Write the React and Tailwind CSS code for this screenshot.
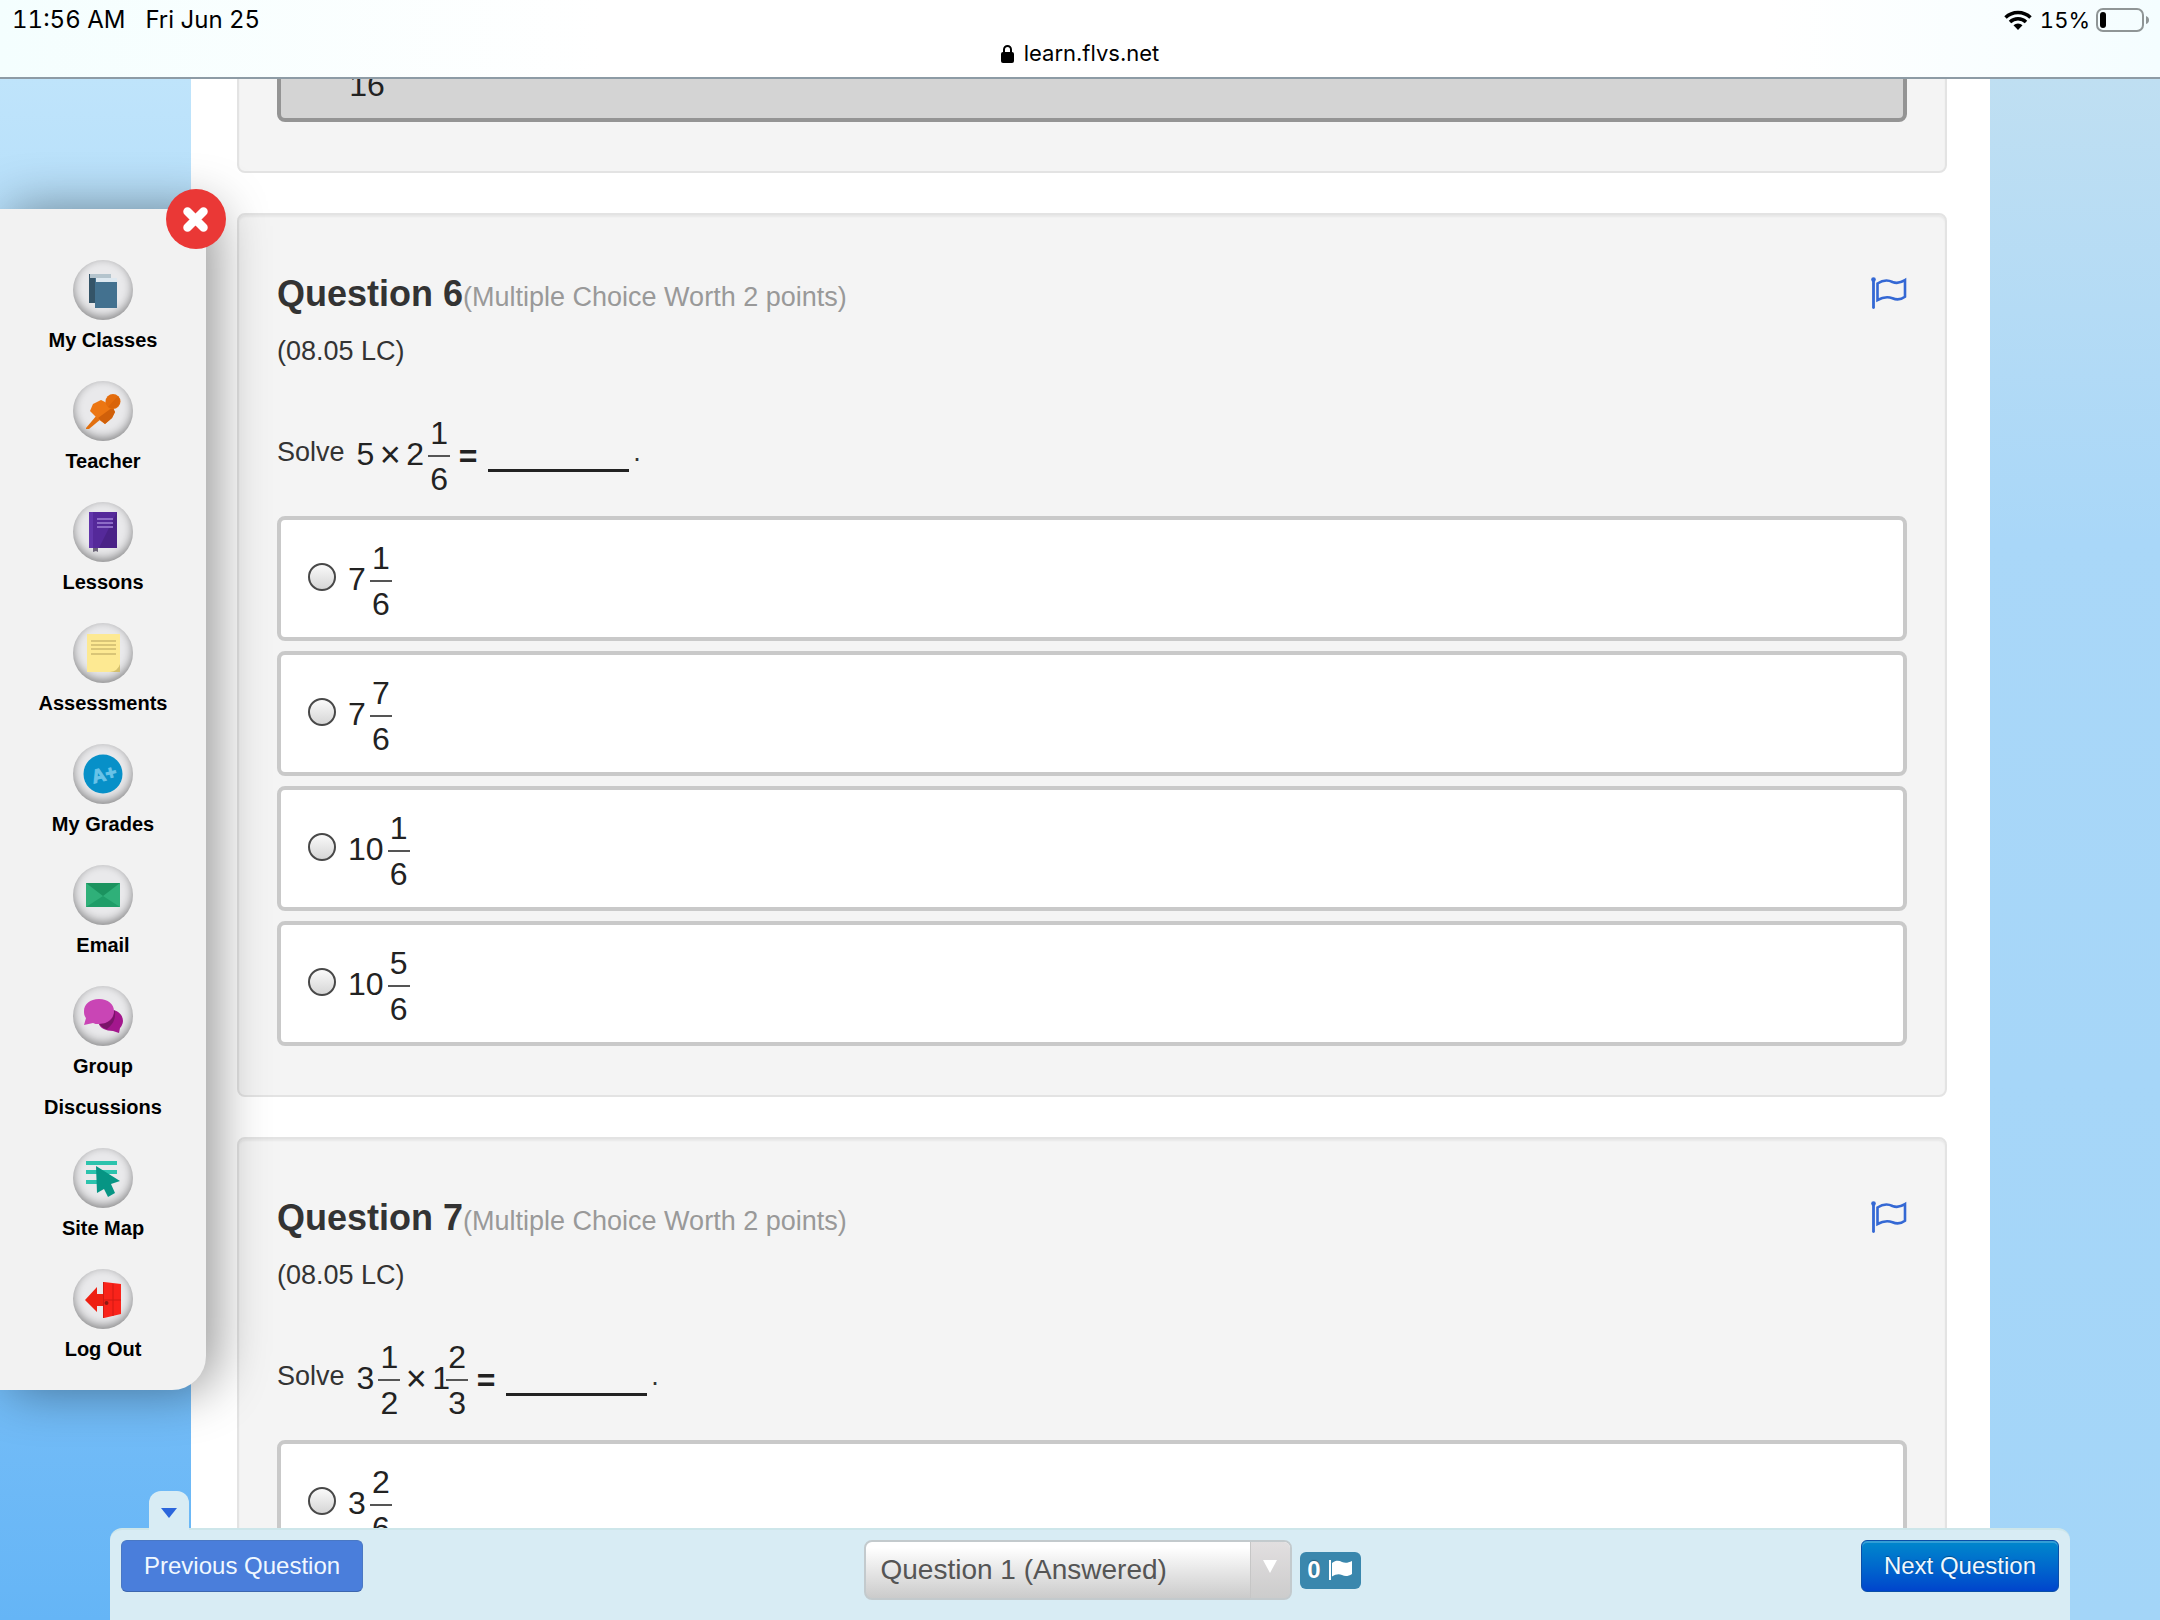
import { useState } from 'react'

function BooksIcon() {
  return (
    <>
      <rect x="16" y="14" width="22" height="29" fill="#345468" />
      <rect x="17" y="14" width="21" height="4" fill="#b4c4cd" />
      <rect x="22" y="18" width="22" height="30" fill="#43718f" />
      <rect x="23" y="18" width="21" height="4" fill="#dde8f0" />
    </>
  )
}

function PinIcon() {
  return (
    <>
      <path d="M13 47 L24 34 L28 38 L16 48 L13 48 Z" fill="#e2700f" />
      <path d="M17 30 L20 23 L28 19 L34 22 L42 31 L39 37 L32 43 L25 38 Z" fill="#ec7612" />
      <path d="M40 26 L42 31 L39 37 L32 43 L25 37 Z" fill="#d0600a" />
      <circle cx="40" cy="20.500" r="7.500" fill="#e46c0c" />
      <path d="M45 15 A7.500 7.500 0 0 1 35 26 Z" fill="#d9640a" />
    </>
  )
}

function NotebookIcon() {
  return (
    <>
      <path d="M20 45h5v5l-2-1-3 1z" fill="#6b6478" />
      <rect x="16" y="10" width="28" height="36" fill="#55299a" />
      <path d="M44 10v36H26z" fill="#4a2287" />
      <rect x="16" y="10" width="4" height="36" fill="#6236ab" />
      <path d="M24 17h16M24 21h16M24 25h16" stroke="#8d6bc6" strokeWidth="2" />
    </>
  )
}

function NoteIcon() {
  return (
    <>
      <path d="M14 11h33v38H14z" fill="#fde992" />
      <path d="M37 49q8-1 10-8v8z" fill="#d3bf6d" />
      <path d="M18 18h25M18 22h25M18 26h25M18 31h25" stroke="#d9c577" strokeWidth="2" />
    </>
  )
}

function GradeIcon() {
  return (
    <>
      <circle cx="30" cy="30" r="19.500" fill="#0790c8" />
      <text x="31" y="37" textAnchor="middle" fontSize="19" fontWeight="bold" fill="#69c3e8" stroke="#69c3e8" strokeWidth="1" transform="rotate(-14 30 30)">
        A+
      </text>
    </>
  )
}

function MailIcon() {
  return (
    <>
      <rect x="13" y="18" width="34" height="24" fill="#2fb079" />
      <path d="M13 18h34L30 31z" fill="#1b935f" />
      <path d="M13 42h34L30 31z" fill="#1f9d68" />
    </>
  )
}

function ChatIcon() {
  return (
    <>
      <path d="M38 24c7 0 12 5 12 11 0 3-2 6-3 7l-1 5-6-2c-7 0-13-3-14-7z" fill="#a3178d" />
      <path d="M26 13c9 0 15 5 15 12s-6 13-15 13c-3 0-4 0-6-1l-9 2 2-7c-2-2-2-5-2-7 0-7 6-12 15-12z" fill="#c945b5" />
      <path d="M41 24c1 8-5 14-15 14 3 3 6 5 8 5 5-4 9-9 8-18z" fill="#7a1569" />
    </>
  )
}

function SiteMapIcon() {
  return (
    <>
      <path d="M13 15h31M13 24h31M13 34h14" stroke="#2cc3ad" strokeWidth="4" />
      <path d="M23 18 L47 33 L38 36 L42 45 L35 49 L31 41 L24 45 Z" fill="#069584" />
    </>
  )
}

function LogoutIcon() {
  return (
    <>
      <path d="M12 31 L24 18 V25 H30 V37 H24 V43 Z" fill="#ee2012" />
      <path d="M31 13 L48 15 V45 L31 49 Z" fill="#f9231a" />
      <path d="M30.500 13v36M40 15v32M31 31h17" stroke="#d01a12" strokeWidth="1" />
      <circle cx="33.500" cy="34" r="2" fill="#8d1a12" />
    </>
  )
}

const MENU = [
  { label: 'My Classes', Icon: BooksIcon },
  { label: 'Teacher', Icon: PinIcon },
  { label: 'Lessons', Icon: NotebookIcon },
  { label: 'Assessments', Icon: NoteIcon },
  { label: 'My Grades', Icon: GradeIcon },
  { label: 'Email', Icon: MailIcon },
  { label: 'Group Discussions', Icon: ChatIcon },
  { label: 'Site Map', Icon: SiteMapIcon },
  { label: 'Log Out', Icon: LogoutIcon },
]

function StatusBar() {
  return (
    <header className="relative z-30 h-[79px] shrink-0 border-b-2 border-[#8d9ba5] bg-[linear-gradient(90deg,#f4fefe,#fff_28%,#fff_82%,#f4fdff)] font-[Inter,sans-serif] text-[22px] leading-7 text-black">
      <div className="flex items-center justify-between pt-1.5 pr-2.5 pl-3">
        <div className="flex gap-5 text-2xl leading-7 tabular-nums">
          <span>11:56 AM</span>
          <span>Fri Jun 25</span>
        </div>
        <div className="flex items-center">
          <svg width="28" height="20" viewBox="0 0 28 20" className="mr-2" fill="none" stroke="#000" strokeWidth="3.500">
            <path d="M1.500 7.500a18 18 0 0 1 25 0" />
            <path d="M6 12a11.500 11.500 0 0 1 16 0" />
            <path d="M9.500 15.200a6.500 6.500 0 0 1 9 0L14 20z" fill="#000" stroke="none" />
          </svg>
          <span className="tabular-nums">15%</span>
          <svg width="54" height="24" viewBox="0 0 54 24" className="ml-1.5">
            <rect x="1" y="1" width="46" height="22" rx="6" fill="none" stroke="#8f9596" strokeWidth="2" />
            <rect x="4" y="4" width="6" height="16" rx="3" fill="#000" />
            <path d="M50 8q3 1 3 4t-3 4z" fill="#8f9596" />
          </svg>
        </div>
      </div>
      <div className="flex items-center justify-center gap-2.5 pt-[5px]">
        <svg width="13" height="19" viewBox="0 0 13 19">
          <path d="M3 9V5.500a3.500 3.500 0 0 1 7 0V9" fill="none" stroke="#000" strokeWidth="2" />
          <rect x="0" y="8" width="13" height="11" rx="2" fill="#000" />
        </svg>
        <span>learn.flvs.net</span>
      </div>
    </header>
  )
}

function Sidebar({ onClose }) {
  return (
    <nav className="absolute top-[130px] left-0 z-20 w-[206px] rounded-br-[34px] bg-[#f2f2f2] pt-[51px] shadow-[10px_0_52px_rgba(0,0,0,0.42)]">
      <button
        type="button"
        aria-label="Close menu"
        onClick={onClose}
        className="absolute -top-5 -right-5 flex size-[60px] items-center justify-center rounded-full bg-[#ea3836]"
      >
        <svg width="28" height="28" viewBox="0 0 28 28">
          <path d="M5.500 6.500l16 16M21.500 6.500l-16 16" stroke="#fff" strokeWidth="8.500" strokeLinecap="round" />
        </svg>
      </button>
      {MENU.map(({ label, Icon }) => (
        <a key={label} href="#" className="mb-5 flex flex-col items-center px-8 text-center text-xl leading-[41px] font-bold text-black">
          <span className="size-[60px] rounded-full bg-[#e9e9eb] shadow-[inset_0_-3px_10px_rgba(0,0,0,0.42)]">
            <svg viewBox="0 0 60 60" className="size-full">
              <Icon />
            </svg>
          </span>
          {label}
        </a>
      ))}
    </nav>
  )
}

function Fraction({ num, den, className = 'ml-1' }) {
  return (
    <span className={`flex w-[22px] flex-col items-center gap-1.5 ${className}`}>
      <span className="h-8">{num}</span>
      <span className="h-0.5 w-full bg-[#555555]" />
      <span>{den}</span>
    </span>
  )
}

function Num({ children }) {
  return <span className="pb-1">{children}</span>
}

function Times() {
  return <span className="mx-1.5 flex w-5 justify-center pb-0.5 text-4xl leading-8">×</span>
}

function Blank() {
  return (
    <>
      <span className="mr-2.5 ml-2 w-5 text-center font-bold">=</span>
      <span className="h-8 w-[141px] border-b-3 border-[#222222]" />
      <span className="pb-2 pl-1 text-[27px] text-[#333333]">.</span>
    </>
  )
}

function Option({ name, whole, num, den, selected }) {
  const look = selected ? 'border-[#949494] bg-[#d4d4d4]' : 'border-[#c9c9c9] bg-white'
  return (
    <label className={`flex items-center rounded-lg border-4 pt-[22px] pr-6 pb-[17px] pl-[27px] text-[32px] leading-8 text-[#222222] ${look}`}>
      <input
        type="radio"
        name={name}
        defaultChecked={selected}
        className="mr-3 mb-2 size-7 appearance-none rounded-full border-2 border-[#484848] bg-linear-to-b from-[#fafafa] to-[#d6d6d6] checked:from-[#777777]"
      />
      {whole && <Num>{whole}</Num>}
      <Fraction num={num} den={den} className={whole ? 'ml-1' : 'ml-2'} />
    </label>
  )
}

function FlagIcon() {
  return (
    <svg width="36" height="32" viewBox="0 0 36 32" fill="none" stroke="#3468d4" strokeWidth="2.600">
      <path d="M2.500 3v27.500" strokeWidth="2.800" strokeLinecap="round" />
      <circle cx="2.500" cy="2.600" r="1.600" fill="#3468d4" strokeWidth="1.500" />
      <path d="M6.500 6.500c6-4 11-3.500 15-1.500 4 1.600 8 1 12.500-1.800v16.500c-4 3-8 3.500-12.500 1.500-5-1.700-9-1.500-15 1.800z" />
    </svg>
  )
}

function Card({ children }) {
  return (
    <section className="rounded-lg border-2 border-[#e3e3e3] bg-[#f4f4f4] px-[38px] pt-[59px] pb-[49px] shadow-[inset_0_2px_2px_rgba(0,0,0,0.05)]">
      {children}
    </section>
  )
}

function Question({ number, prompt, options }) {
  return (
    <Card>
      <div className="flex items-start justify-between">
        <h2 className="text-4xl leading-10 font-bold text-[#333333]">
          Question {number}
          <span className="text-[27px] leading-none font-normal text-[#999999]">(Multiple Choice Worth 2 points)</span>
        </h2>
        <button type="button" aria-label={`Flag question ${number}`} className="mt-[3px]">
          <FlagIcon />
        </button>
      </div>
      <p className="mt-[17px] text-[27px] leading-10 text-[#333333]">(08.05 LC)</p>
      <div className="mt-[46px] mb-[21px] flex items-center text-[32px] leading-8 text-[#222222]">
        <span className="mr-3 pb-2 text-[27px] text-[#333333]">Solve</span>
        {prompt}
      </div>
      <div className="flex flex-col gap-2.5">
        {options.map(([whole, num, den]) => (
          <Option key={`${whole}-${num}`} name={`question-${number}`} whole={whole} num={num} den={den} />
        ))}
      </div>
    </Card>
  )
}

function BottomBar() {
  return (
    <footer className="absolute right-[90px] bottom-0 left-[110px] z-10 flex h-[92px] items-start justify-between rounded-t-xl border-t-2 border-[#cde6ea] bg-[#d8ecf4] px-[11px] pt-2.5">
      <button
        type="button"
        aria-label="Collapse toolbar"
        className="absolute -top-[39px] left-[39px] flex h-[42px] w-10 justify-center rounded-t-xl bg-[#d8ecf4] pt-[17px]"
      >
        <svg width="16" height="10" viewBox="0 0 16 10">
          <path d="M0 0h16L8 10z" fill="#2b66dc" />
        </svg>
      </button>
      <button type="button" className="h-[52px] rounded-md border border-[#4a78c4] border-b-[#3c66ae] bg-[#4a7edb] px-[22px] text-2xl text-[#f0f8ff]">
        Previous Question
      </button>
      <div className="flex items-center gap-2">
        <div className="relative">
          <select
            aria-label="Go to question"
            className="h-[60px] w-[428px] appearance-none rounded-lg border-2 border-[#c3cacd] bg-linear-to-b from-white from-10% to-[#cbcbcb] pl-[15px] text-[28px] text-[#555555]"
          >
            <option>Question 1 (Answered)</option>
          </select>
          <span className="pointer-events-none absolute inset-y-0.5 right-0.5 flex w-10 justify-center rounded-r-md border-l border-[#c6c6c6] bg-linear-to-b from-[#e2dfe0] to-[#cccccc] pt-[18px]">
            <svg width="14" height="13" viewBox="0 0 14 13">
              <path d="M0 0h14L7 13z" fill="#fff" />
            </svg>
          </span>
        </div>
        <span className="flex h-[37px] w-[61px] items-center justify-center gap-2 rounded-md bg-[#3a87ad] text-2xl font-bold text-white text-shadow-[0_-1px_1px_rgba(0,0,0,0.3)]">
          0
          <svg width="24" height="20" viewBox="0 0 24 20" fill="#fff">
            <path d="M0 0h2v20H0z" />
            <path d="M3 3c4-3 7-2.500 10-1 3 1.300 6 1 10-1v13c-4 2.500-7 2.500-10 1-3-1.300-6-1-10 1.500z" />
          </svg>
        </span>
      </div>
      <button
        type="button"
        className="h-[52px] rounded-md border border-[#0a4fa8] bg-linear-to-b from-[#0088cc] to-[#0044cc] px-[22px] text-2xl text-[#f0f8ff] shadow-[inset_0_2px_0_rgba(255,255,255,0.2)] text-shadow-[0_-1px_1px_rgba(0,0,0,0.3)]"
      >
        Next Question
      </button>
    </footer>
  )
}

export default function App() {
  const [menuOpen, setMenuOpen] = useState(true)

  return (
    <div className="flex h-screen flex-col overflow-hidden font-['Liberation_Sans',Arial,sans-serif]">
      <StatusBar />
      <div className="relative flex min-h-0 flex-1 bg-linear-to-b from-[#bfe4fb] to-[#65b5f6]">
        <div className="w-[191px] shrink-0" />
        <main className="flex min-w-0 flex-1 flex-col gap-10 overflow-hidden bg-white pr-[43px] pl-[46px]">
          <div className="-mt-[143px]">
            <Card>
              <Option name="question-5" den="16" selected />
            </Card>
          </div>
          <Question
            number={6}
            prompt={
              <>
                <Num>5</Num>
                <Times />
                <Num>2</Num>
                <Fraction num="1" den="6" />
                <Blank />
              </>
            }
            options={[['7', '1', '6'], ['7', '7', '6'], ['10', '1', '6'], ['10', '5', '6']]}
          />
          <Question
            number={7}
            prompt={
              <>
                <Num>3</Num>
                <Fraction num="1" den="2" />
                <Times />
                <Num>1</Num>
                <Fraction num="2" den="3" className="-ml-1" />
                <Blank />
              </>
            }
            options={[['3', '2', '6']]}
          />
        </main>
        <div className="w-[170px] shrink-0 bg-linear-to-b from-[#bfdff2] via-[#a9d7f8] via-30% to-[#a3d5f8]" />
        {menuOpen && <Sidebar onClose={() => setMenuOpen(false)} />}
        <BottomBar />
      </div>
    </div>
  )
}
